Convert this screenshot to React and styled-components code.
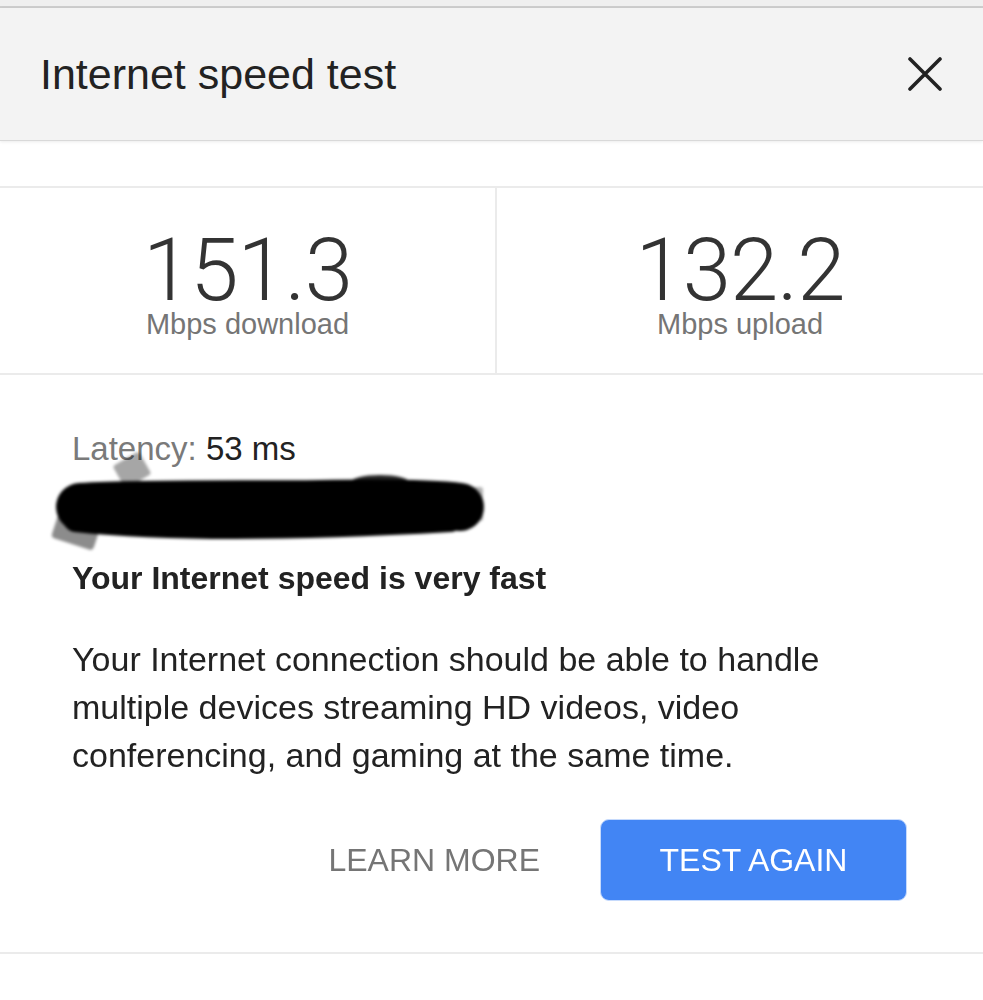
import styled, { createGlobalStyle } from "styled-components";

const GlobalStyle = createGlobalStyle`
  html, body {
    margin: 0;
    padding: 0;
    background: #ffffff;
  }
  body {
    font-family: "Liberation Sans", Arial, sans-serif;
    -webkit-font-smoothing: antialiased;
  }
`;

const Page = styled.div`
  width: 983px;
  min-height: 1000px;
  background: #ffffff;
  overflow: hidden;
`;

// 위쪽 얇은 띠
const TopStrip = styled.div`
  height: 6px;
  background: #efefef;
  border-bottom: 2px solid #cdcdcd;
`;

const Header = styled.header`
  height: 132px;
  display: flex;
  align-items: center;
  justify-content: space-between;
  padding: 0 41px 0 40px;
  background: #f3f3f3;
  border-bottom: 1px solid #d9d9d9;
  box-shadow: 0 1px 3px rgba(0, 0, 0, 0.08);
`;

const Title = styled.h1`
  margin: 0;
  font-size: 43px;
  line-height: 43px;
  font-weight: 400;
  color: #222222;
`;

const CloseButton = styled.button`
  display: flex;
  padding: 0;
  border: 0;
  background: transparent;
  cursor: pointer;
`;

const Spacer = styled.div`
  height: 45px;
`;

const StatsRow = styled.section`
  display: grid;
  grid-template-columns: 495px 1fr;
  border-top: 2px solid #ebebeb;
  border-bottom: 2px solid #ebebeb;
`;

const Stat = styled.div`
  display: flex;
  flex-direction: column;
  align-items: center;
  padding: 44px 0 34px;
  border-left: ${(p) => (p.$divider ? "2px solid #ebebeb" : "none")};
`;

const StatValue = styled.div`
  font-family: Roboto, "Liberation Sans", sans-serif;
  font-weight: 300;
  font-size: 87px;
  line-height: 76px;
  letter-spacing: -1px;
  color: #333333;
`;

const StatLabel = styled.div`
  margin-top: 2px;
  font-size: 29px;
  line-height: 29px;
  color: #757575;
`;

const Content = styled.section`
  padding: 54px 0 0 72px;
`;

const LatencyLine = styled.div`
  font-size: 33px;
  line-height: 40px;
  color: #222222;
`;

const Muted = styled.span`
  color: #7a7a7a;
`;

const Redaction = styled.div`
  height: 81px;
  margin-left: -22px;

  svg {
    display: block;
    overflow: visible;
  }
`;

const Verdict = styled.h2`
  margin: 8px 0 0;
  font-size: 32px;
  line-height: 40px;
  font-weight: 700;
  color: #222222;
`;

const Description = styled.p`
  margin: 37px 0 0;
  max-width: 790px;
  font-size: 34px;
  line-height: 48px;
  color: #222222;
`;

const Actions = styled.div`
  display: flex;
  justify-content: flex-end;
  align-items: center;
  gap: 60px;
  margin-top: 40px;
  padding-right: 76px;
`;

const TextButton = styled.button`
  padding: 0;
  border: 0;
  background: transparent;
  font-family: "Liberation Sans", Arial, sans-serif;
  font-size: 32px;
  color: #757575;
  cursor: pointer;
`;

const PrimaryButton = styled.button`
  width: 307px;
  height: 82px;
  border: 1px solid #c6dafc;
  border-radius: 9px;
  background: #4285f4;
  font-family: "Liberation Sans", Arial, sans-serif;
  font-size: 32px;
  color: #ffffff;
  cursor: pointer;
`;

const BottomRule = styled.div`
  margin-top: 51px;
  border-top: 2px solid #ebebeb;
`;

const CloseIcon = () => (
  <svg width="34" height="34" viewBox="0 0 34 34">
    <path
      d="M2 2 L32 32 M32 2 L2 32"
      stroke="#222"
      strokeWidth="3.6"
      strokeLinecap="round"
      fill="none"
    />
  </svg>
);

// 가려진 줄 (검은 낙서)
const Scribble = () => (
  <svg width="440" height="81" viewBox="0 0 440 81">
    <defs>
      <filter id="soft" x="-10%" y="-40%" width="120%" height="180%">
        <feGaussianBlur stdDeviation="1.8" />
      </filter>
    </defs>
    <g filter="url(#soft)">
      <rect x="67" y="-12" width="30" height="26" rx="3" fill="#000" opacity="0.35" transform="rotate(-30 82 1)" />
      <rect x="398" y="18" width="35" height="34" rx="3" fill="#000" opacity="0.3" />
      <rect x="6" y="36" width="44" height="40" rx="4" fill="#000" opacity="0.45" transform="rotate(18 28 56)" />
      <path
        d="M30 38 C 100 34, 200 36, 270 35 C 330 34, 380 34, 410 38"
        stroke="#000"
        strokeWidth="48"
        strokeLinecap="round"
        fill="none"
      />
      <path
        d="M26 50 C 120 60, 260 58, 400 50"
        stroke="#000"
        strokeWidth="26"
        strokeLinecap="round"
        fill="none"
      />
      <ellipse cx="330" cy="14" rx="30" ry="8" fill="#000" opacity="0.85" />
    </g>
  </svg>
);

const App = () => {
  return (
    <Page>
      <GlobalStyle />
      <TopStrip />
      <Header>
        <Title>Internet speed test</Title>
        <CloseButton aria-label="Close">
          <CloseIcon />
        </CloseButton>
      </Header>
      <Spacer />
      <StatsRow>
        <Stat>
          <StatValue>151.3</StatValue>
          <StatLabel>Mbps download</StatLabel>
        </Stat>
        <Stat $divider>
          <StatValue>132.2</StatValue>
          <StatLabel>Mbps upload</StatLabel>
        </Stat>
      </StatsRow>
      <Content>
        <LatencyLine>
          <Muted>Latency: </Muted>53 ms
        </LatencyLine>
        <Redaction>
          <Scribble />
        </Redaction>
        <Verdict>Your Internet speed is very fast</Verdict>
        <Description>
          Your Internet connection should be able to handle multiple devices
          streaming HD videos, video conferencing, and gaming at the same time.
        </Description>
      </Content>
      <Actions>
        <TextButton>LEARN MORE</TextButton>
        <PrimaryButton>TEST AGAIN</PrimaryButton>
      </Actions>
      <BottomRule />
    </Page>
  );
};

export default App;
